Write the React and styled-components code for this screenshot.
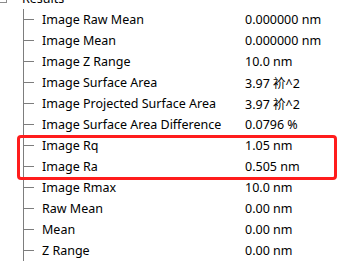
import React from "react";
import styled, { createGlobalStyle } from "styled-components";

const rows = [
  { label: "Image Raw Mean", value: "0.000000 nm" },
  { label: "Image Mean", value: "0.000000 nm" },
  { label: "Image Z Range", value: "10.0 nm" },
  { label: "Image Surface Area", value: "3.97 衸^2" },
  { label: "Image Projected Surface Area", value: "3.97 衸^2" },
  { label: "Image Surface Area Difference", value: "0.0796 %" },
  { label: "Image Rq", value: "1.05 nm", marked: true },
  { label: "Image Ra", value: "0.505 nm", marked: true },
  { label: "Image Rmax", value: "10.0 nm" },
  { label: "Raw Mean", value: "0.00 nm" },
  { label: "Mean", value: "0.00 nm" },
  { label: "Z Range", value: "0.00 nm" },
];

const GlobalStyle = createGlobalStyle`
  html, body {
    margin: 0;
    padding: 0;
    background: #ffffff;
    overflow: hidden;
  }
  body {
    font-family: "Noto Sans", "Noto Sans CJK SC", sans-serif;
    font-size: 12.5px;
    color: #000;
  }
`;

const Panel = styled.div`
  width: 343px;
  height: 261px;
  overflow: hidden;
`;

const Header = styled.div`
  display: flex;
  align-items: center;
  height: 21px;
  margin-top: -12px;
`;

const ExpandBox = styled.span`
  box-sizing: border-box;
  width: 9px;
  height: 9px;
  margin-left: -2px;
  border: 1px solid #8c8c8c;
  flex: none;
`;

const HeaderText = styled.span`
  margin-left: 15px;
`;

const Children = styled.div`
  margin-left: 23px;
  border-left: 1px solid #7d7d7d;
  padding-bottom: 40px;
`;

const Row = styled.div`
  display: flex;
  align-items: center;
  height: 21px;
  white-space: nowrap;
`;

const Branch = styled.span`
  width: 10px;
  height: 1px;
  background: #7d7d7d;
  flex: none;
`;

const Label = styled.span`
  width: 203px;
  margin-left: 8px;
  flex: none;
  overflow: hidden;
`;

const Value = styled.span`
  flex: none;
`;

const Marked = styled.div`
  position: relative;
  &::before {
    content: "";
    position: absolute;
    left: -7px;
    right: 6px;
    top: 0;
    bottom: -3px;
    border: 3px solid #ff1c1c;
    border-radius: 4px;
    pointer-events: none;
  }
`;

const ResultRow = ({ label, value }) => (
  <Row>
    <Branch />
    <Label>{label}</Label>
    <Value>{value}</Value>
  </Row>
);

export default function App() {
  const before = rows.filter((r, i) => i < 6);
  const marked = rows.filter((r) => r.marked);
  const after = rows.filter((r, i) => i > 7);
  return (
    <Panel>
      <GlobalStyle />
      <Header>
        <ExpandBox />
        <HeaderText>Results</HeaderText>
      </Header>
      <Children>
        {before.map((r) => (
          <ResultRow key={r.label} {...r} />
        ))}
        <Marked>
          {marked.map((r) => (
            <ResultRow key={r.label} {...r} />
          ))}
        </Marked>
        {after.map((r) => (
          <ResultRow key={r.label} {...r} />
        ))}
      </Children>
    </Panel>
  );
}
